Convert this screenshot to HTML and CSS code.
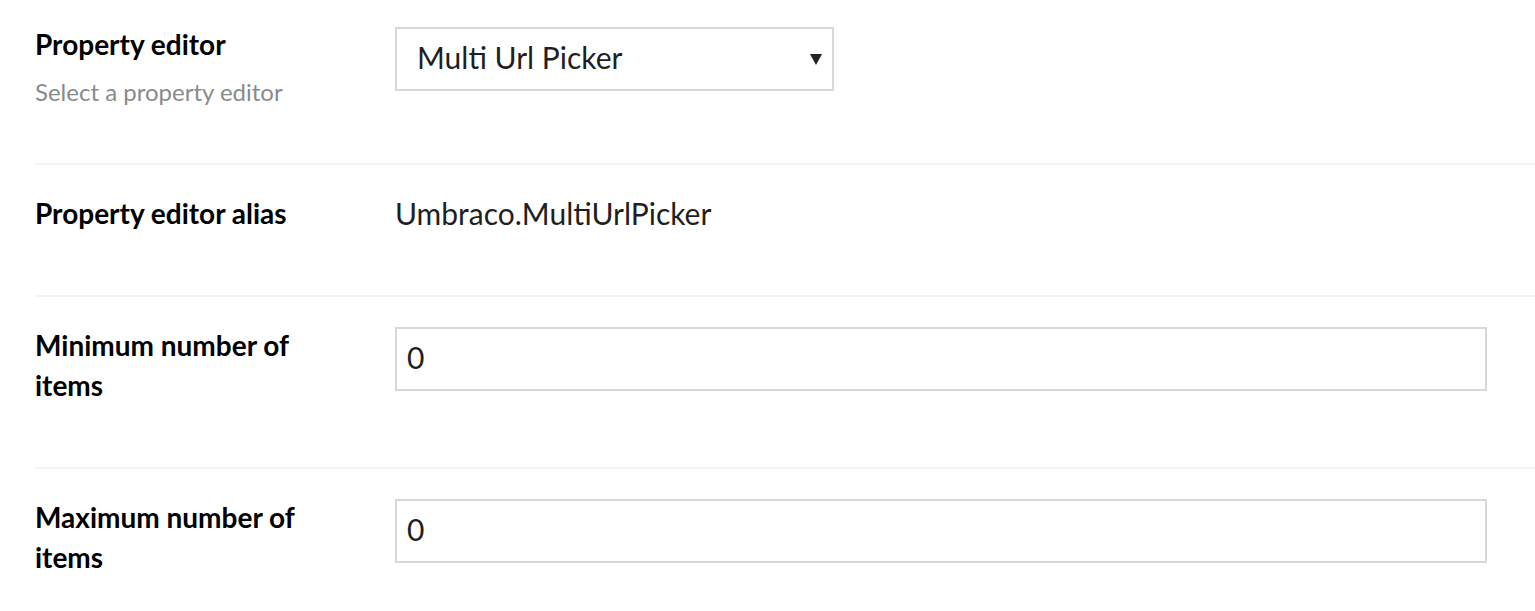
FILE: index.html
```html
<!DOCTYPE html>
<html>
<head>
<meta charset="utf-8">
<link rel="stylesheet" href="styles.css">
</head>
<body>
<div class="form">
  <div class="row row-first">
    <div class="label-col">
      <div class="label">Property editor</div>
      <div class="desc">Select a property editor</div>
    </div>
    <div class="field-col">
      <div class="select">
        <span class="select-text">Multi Url Picker</span>
        <span class="arrow"></span>
      </div>
    </div>
  </div>
  <div class="row">
    <div class="label-col">
      <div class="label">Property editor alias</div>
    </div>
    <div class="field-col">
      <div class="value">Umbraco.MultiUrlPicker</div>
    </div>
  </div>
  <div class="row">
    <div class="label-col">
      <div class="label">Minimum number of items</div>
    </div>
    <div class="field-col">
      <div class="input">0</div>
    </div>
  </div>
  <div class="row row-last">
    <div class="label-col">
      <div class="label">Maximum number of items</div>
    </div>
    <div class="field-col">
      <div class="input">0</div>
    </div>
  </div>
</div>
</body>
</html>
```

FILE: styles.css
```css
html, body {
  margin: 0;
  padding: 0;
  background: #fff;
  overflow: hidden;
}
body {
  font-family: Lato, "Open Sans", sans-serif;
  color: #000;
}
.form {
  padding-left: 35px;
}
.row {
  display: flex;
  padding: 28px 0 62px;
  border-bottom: 2px solid #f3f3f4;
}
.row-first {
  padding-top: 24px;
  padding-bottom: 55px;
}
.row-last {
  border-bottom: none;
}
.label-col {
  width: 300px;
  flex: none;
  margin-right: 60px;
}
.label {
  font-size: 28px;
  font-weight: 700;
  line-height: 40px;
}
.desc {
  font-size: 24px;
  line-height: 32px;
  color: #8a8a8a;
  margin-top: 12px;
}
.field-col {
  flex: 1;
}
.select {
  box-sizing: border-box;
  width: 439px;
  height: 64px;
  border: 2px solid #d8d8d8;
  display: flex;
  align-items: center;
  padding: 0 10px 4px 20px;
  margin-top: 3px;
}
.select-text {
  flex: 1;
  font-size: 30px;
  color: #1f1f22;
}
.arrow {
  width: 0;
  height: 0;
  border-left: 6px solid transparent;
  border-right: 6px solid transparent;
  border-top: 11px solid #222;
  margin-top: 4px;
}
.value {
  font-size: 30px;
  line-height: 40px;
  color: #1f1f22;
}
.input {
  box-sizing: border-box;
  width: 1092px;
  height: 64px;
  border: 2px solid #d8d8d8;
  display: flex;
  align-items: center;
  padding: 0 0 4px 10px;
  margin-top: 2px;
  font-size: 30px;
  color: #1f1f22;
}
```
